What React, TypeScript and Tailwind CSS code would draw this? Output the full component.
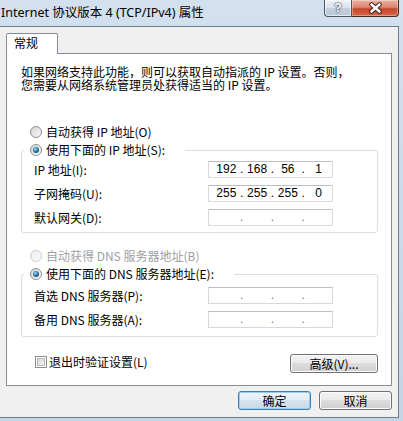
import React from 'react';

const cjk = "font-['Noto_Sans_CJK_SC','Noto_Sans',sans-serif]";

function Radio({ gid, checked = false, disabled = false }: { gid: string; checked?: boolean; disabled?: boolean }) {
  return (
    <svg width="12" height="12" viewBox="0 0 12 12" className="shrink-0">
      <defs>
        <linearGradient id={`rb-${gid}`} x1="0" y1="0" x2="1" y2="1">
          <stop offset="0" stopColor={disabled ? '#ededed' : '#d3d3d3'} />
          <stop offset="1" stopColor="#fbfbfb" />
        </linearGradient>
        <radialGradient id={`rd-${gid}`} cx="0.4" cy="0.35" r="0.7">
          <stop offset="0" stopColor="#a6e3fb" />
          <stop offset="0.45" stopColor="#3a90c1" />
          <stop offset="1" stopColor="#0f3d66" />
        </radialGradient>
      </defs>
      <circle cx="6" cy="6" r="5.5" fill={`url(#rb-${gid})`} stroke={disabled ? '#cacaca' : '#8f8f8f'} />
      {checked && <circle cx="6" cy="6" r="3" fill={`url(#rd-${gid})`} />}
    </svg>
  );
}

function IpBox({ parts }: { parts?: string[] }) {
  const p = parts ?? ['', '', '', ''];
  return (
    <div className="w-[125px] h-[17px] shrink-0 border border-[#d5d9df] border-t-[#b9bdc4] bg-white flex items-center pl-[4px] font-['Liberation_Sans',sans-serif] text-[12px] leading-[15px] text-black">
      {p.map((v, i) => (
        <React.Fragment key={i}>
          {i > 0 && <span className={`w-[4px] text-center ${parts ? '' : 'text-[#7a7a7a]'}`}>.</span>}
          <span className="flex-1 text-center">{v}</span>
        </React.Fragment>
      ))}
    </div>
  );
}

function Row({ label, parts }: { label: string; parts?: string[] }) {
  return (
    <div className="flex items-center h-[17px] pl-[12px]">
      <span className="w-[174px] leading-[16px]">{label}</span>
      <IpBox parts={parts} />
    </div>
  );
}

const grayBtn =
  'flex items-center justify-center rounded-[3px] border border-[#707070] bg-[linear-gradient(to_bottom,#f2f2f2_0%,#ebebeb_45%,#dddddd_50%,#cfcfcf_100%)] shadow-[inset_0_0_0_1px_#fbfbfb] leading-[16px]';

export default function App() {
  return (
    <div className={`w-[403px] h-[421px] flex flex-col overflow-hidden bg-[linear-gradient(to_bottom,#d3e0ee,#c4d5e8)] text-[12px] text-black ${cjk}`}>
      {/* caption */}
      <div className="h-[26px] shrink-0 flex items-start justify-between">
        <div className="pl-[1px] pt-[5px] leading-[16px] text-[12.5px] font-['Noto_Sans','Noto_Sans_CJK_SC',sans-serif]">
          Internet 协议版本 4 (TCP/IPv4) 属性
        </div>
        <div className="flex mr-[4px] h-[17px]">
          <div className="w-[28px] h-full rounded-bl-[4px] border border-t-0 border-[#4a5666] bg-[linear-gradient(to_bottom,#eef2f7_0%,#d8e1eb_50%,#c3cfdc_51%,#b9c7d6_100%)] shadow-[inset_0_0_0_1px_rgba(255,255,255,0.6)] flex items-center justify-center">
            <span className="text-white font-bold text-[13px] leading-[14px] font-['Liberation_Sans',sans-serif] [text-shadow:0_0_2px_#1e2a38,0_0_1px_#1e2a38]">?</span>
          </div>
          <div className="w-[47px] h-full rounded-br-[4px] border border-t-0 border-l-0 border-[#4a2a24] bg-[linear-gradient(to_bottom,#eab2a2_0%,#dc8670_45%,#c7482a_55%,#d4654a_100%)] shadow-[inset_0_0_0_1px_rgba(255,255,255,0.35)] flex items-center justify-center">
            <svg width="15" height="12" viewBox="0 0 15 12">
              <path d="M3.5 2.5 L11.5 9.5 M11.5 2.5 L3.5 9.5" stroke="#3a1a14" strokeWidth="4.4" strokeLinecap="round" />
              <path d="M3.5 2.5 L11.5 9.5 M11.5 2.5 L3.5 9.5" stroke="#ffffff" strokeWidth="2.6" strokeLinecap="round" />
            </svg>
          </div>
        </div>
      </div>

      {/* dialog body */}
      <div className="flex-1 flex flex-col mr-[4px] mb-[3px] border-t border-r border-b border-[#6f7d8c] bg-[#f0f0f0] px-[6px] pt-[6px]">
        <div className="flex">
          <div className="relative z-10 w-[52px] h-[21px] -mb-px border border-b-0 border-[#898c95] rounded-t-[2px] bg-white pl-[7px] pt-[1px] leading-[16px]">
            常规
          </div>
        </div>

        <div className="h-[333px] border border-[#898c95] bg-white flex flex-col">
          <div className="pl-[14px] pt-[11px] leading-[13px]">
            <div>如果网络支持此功能，则可以获取自动指派的 IP 设置。否则，</div>
            <div>您需要从网络系统管理员处获得适当的 IP 设置。</div>
          </div>

          <div className="mt-[33px] ml-[23px] h-[16px] flex items-center gap-[4px] leading-[16px]">
            <Radio gid="a" />
            <span>自动获得 IP 地址(O)</span>
          </div>

          <fieldset className="mt-[2px] ml-[14px] mr-[13px] border border-[#d5dfe5] rounded-[3px] pt-[3px] pb-[6px] flex flex-col gap-[7px]">
            <legend className="ml-[2px] pl-[6px] pr-[20px] h-[16px]">
              <div className="flex items-center gap-[4px] h-[16px] leading-[16px]">
                <Radio gid="b" checked />
                <span>使用下面的 IP 地址(S):</span>
              </div>
            </legend>
            <Row label="IP 地址(I):" parts={['192', '168', '56', '1']} />
            <Row label="子网掩码(U):" parts={['255', '255', '255', '0']} />
            <Row label="默认网关(D):" />
          </fieldset>

          <div className="mt-[15px] ml-[23px] h-[16px] flex items-center gap-[4px] leading-[16px] text-[#a0a0a0]">
            <Radio gid="c" disabled />
            <span>自动获得 DNS 服务器地址(B)</span>
          </div>

          <fieldset className="mt-[2px] ml-[14px] mr-[13px] border border-[#d5dfe5] rounded-[3px] pt-[5px] pb-[8px] flex flex-col gap-[7px]">
            <legend className="ml-[2px] pl-[6px] pr-[20px] h-[16px]">
              <div className="flex items-center gap-[4px] h-[16px] leading-[16px]">
                <Radio gid="d" checked />
                <span>使用下面的 DNS 服务器地址(E):</span>
              </div>
            </legend>
            <Row label="首选 DNS 服务器(P):" />
            <Row label="备用 DNS 服务器(A):" />
          </fieldset>

          <div className="mt-[17px] mr-[13px] flex items-start justify-between">
            <div className="ml-[28px] h-[16px] flex items-center gap-[2px] leading-[16px]">
              <div className="w-[12px] h-[12px] border border-[#8e8f8f] bg-white p-[1px]">
                <div className="w-full h-full border border-[#b4b8bd] bg-[linear-gradient(135deg,#d9d9d9,#f4f4f4)]" />
              </div>
              <span>退出时验证设置(L)</span>
            </div>
            <div className={`w-[88px] h-[19px] ${grayBtn}`}>高级(V)...</div>
          </div>
        </div>

        <div className="mt-[5px] flex justify-end gap-[8px]">
          <div className="w-[73px] h-[19px] flex items-center justify-center rounded-[3px] border border-[#3c7fb1] bg-[linear-gradient(to_bottom,#eef4f9_0%,#e4edf4_45%,#d6e3ed_50%,#c9d9e6_100%)] shadow-[inset_0_0_0_1px_#98cdee] leading-[16px]">
            确定
          </div>
          <div className={`w-[73px] h-[19px] ${grayBtn}`}>取消</div>
        </div>
      </div>
    </div>
  );
}
